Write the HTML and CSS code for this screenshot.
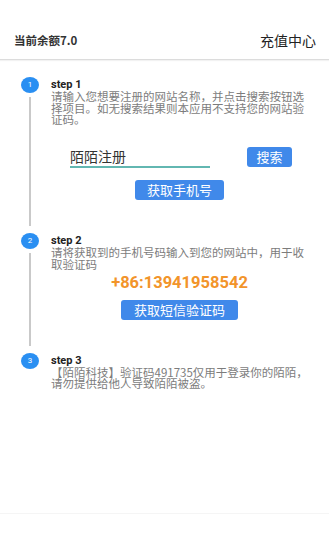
FILE: index.html
```html
<!DOCTYPE html>
<html lang="zh">
<head>
<meta charset="utf-8">
<title>充值中心</title>
<link rel="stylesheet" href="styles.css">
</head>
<body>
<div class="page">
  <header class="header">
    <span class="balance">当前余额7.0</span>
    <span class="center-title">充值中心</span>
  </header>
  <main class="timeline">
    <section class="step step-1">
      <div class="marker"><span class="dot">1</span><span class="line"></span></div>
      <div class="content">
        <div class="title">step 1</div>
        <p class="desc">请输入您想要注册的网站名称，并点击搜索按钮选择项目。如无搜索结果则本应用不支持您的网站验证码。</p>
        <div class="search-row">
          <div class="input">陌陌注册</div>
          <button class="btn btn-small">搜索</button>
        </div>
        <button class="btn btn-center">获取手机号</button>
      </div>
    </section>
    <section class="step step-2">
      <div class="marker"><span class="dot">2</span><span class="line"></span></div>
      <div class="content">
        <div class="title">step 2</div>
        <p class="desc">请将获取到的手机号码输入到您的网站中，用于收取验证码</p>
        <div class="phone">+86:13941958542</div>
        <button class="btn btn-center">获取短信验证码</button>
      </div>
    </section>
    <section class="step step-3">
      <div class="marker"><span class="dot">3</span></div>
      <div class="content">
        <div class="title">step 3</div>
        <p class="desc">【陌陌科技】验证码491735仅用于登录你的陌陌，请勿提供给他人导致陌陌被盗。</p>
      </div>
    </section>
  </main>
  <footer class="footer"></footer>
</div>
</body>
</html>
```

FILE: styles.css
```css
html, body {
  margin: 0;
  padding: 0;
  background: #ffffff;
}
.page {
  width: 329px;
  height: 550px;
  display: flex;
  flex-direction: column;
  font-family: "Noto Sans CJK SC", "Noto Sans", sans-serif;
  overflow: hidden;
}
.header {
  height: 39px;
  padding: 20px 13px 0 14px;
  display: flex;
  justify-content: space-between;
  align-items: center;
  border-bottom: 1px solid #dcdcdc;
  box-shadow: 0 1px 1px rgba(0,0,0,0.05);
}
.balance {
  font-size: 11.5px;
  font-weight: bold;
  color: #333;
}
.center-title {
  font-size: 14px;
  color: #222;
}
.timeline {
  padding-top: 17px;
  flex: 1;
}
.step {
  display: flex;
}
.marker {
  width: 42px;
  padding-left: 9px;
  display: flex;
  flex-direction: column;
  align-items: center;
}
.dot {
  width: 18px;
  height: 16px;
  border-radius: 50%;
  background: #2a8ff2;
  color: #fff;
  font-family: Roboto, sans-serif;
  font-size: 8px;
  line-height: 16px;
  text-align: center;
  flex: none;
}
.line {
  flex: 1;
  width: 1.5px;
  background: #c9c9c9;
  margin: 4px 0 7px;
}
.content {
  flex: 1;
  padding: 2px 21px 0 0;
  display: flex;
  flex-direction: column;
}
.title {
  font-family: Roboto, "Noto Sans", sans-serif;
  font-weight: bold;
  font-size: 11px;
  line-height: 12px;
  height: 12px;
  color: #222;
}
.desc {
  margin: 0;
  font-size: 11.5px;
  line-height: 11.7px;
  color: #7c7c7c;
}
.search-row {
  display: flex;
  align-items: center;
  padding-left: 19px;
  margin-top: 20px;
}
.input {
  width: 140px;
  height: 20px;
  font-size: 14px;
  line-height: 20px;
  color: #333;
  border-bottom: 2px solid #62b7b1;
}
.btn {
  border: none;
  background: #4089ea;
  color: #fff;
  font-family: "Noto Sans CJK SC", sans-serif;
  font-size: 13px;
  border-radius: 3px;
  padding: 0;
  height: 20px;
  line-height: 20px;
}
.btn-small {
  width: 45px;
  margin-left: 37px;
}
.btn-center {
  align-self: center;
  padding: 0 8px;
  margin-top: 12px;
}
.step-1 .btn-center {
  width: 89px;
}
.step-1 .content {
  padding-bottom: 33px;
}
.step-2 .content {
  padding-bottom: 33px;
}
.phone {
  align-self: center;
  font-family: Roboto, sans-serif;
  font-weight: bold;
  font-size: 16.5px;
  line-height: 18px;
  color: #f2942a;
  margin-top: 3px;
}
.step-2 .btn-center {
  width: 117px;
  margin-top: 8px;
}
.footer {
  height: 36px;
  border-top: 1px solid #f5f5f5;
}
```
